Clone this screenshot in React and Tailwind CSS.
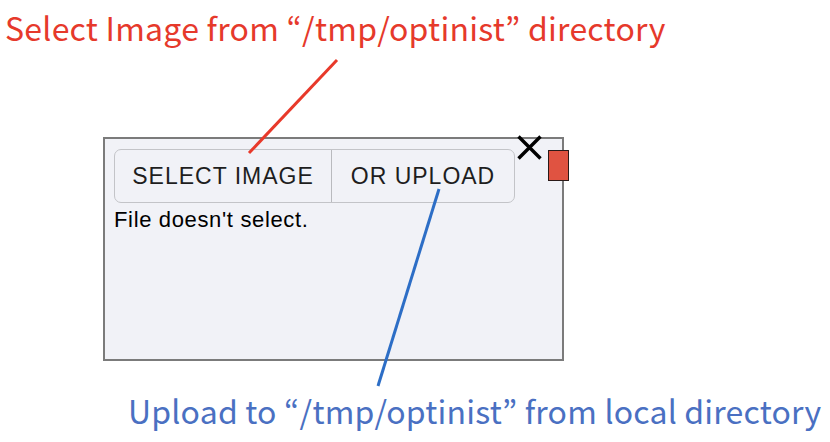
export default function App() {
  return (
    <div className="relative w-[830px] h-[442px] overflow-hidden bg-white">
      <p
        className="pl-[5px] pt-[7px] text-[32px] leading-[40px] tracking-[0.25px] text-[#e6392b] whitespace-nowrap"
        style={{ fontFamily: '"Noto Sans CJK JP", "Noto Sans", sans-serif' }}
      >
        Select Image from “/tmp/optinist” directory
      </p>

      <div
        className="relative ml-[103px] mt-[90px] w-[461px] h-[224px] border-2 border-[#7b7b7b] bg-[#f1f2f7] pl-[9px] pt-[10px]"
        style={{ fontFamily: '"Liberation Sans", Arial, sans-serif' }}
      >
        <div className="flex h-[54px] w-[401px] rounded-[7px] border border-[#c3c4c8] text-[23px] tracking-[1px] text-[#1e1e1e]">
          <div className="flex w-[217px] items-center justify-center border-r border-[#b9babe] pt-[1px]">
            SELECT IMAGE
          </div>
          <div className="flex flex-1 items-center justify-center pt-[1px]">OR UPLOAD</div>
        </div>
        <p className="mt-[4px] text-[22px] leading-[26px] tracking-[0.65px] text-black">
          File doesn't select.
        </p>

        <svg
          className="absolute left-[411px] top-[-5px] h-[27px] w-[27px]"
          viewBox="0 0 27 27"
        >
          <path d="M2.5 2.5 L24.5 24.5 M24.5 2.5 L2.5 24.5" stroke="#000" strokeWidth="3.4" strokeLinecap="butt" />
        </svg>
        <div className="absolute left-[443px] top-[11px] h-[31px] w-[21px] border-[1.5px] border-[#2a1a18] bg-[#e05341]" />
      </div>

      <p
        className="mt-[29px] pl-[128px] text-[32px] leading-[40px] tracking-[0.2px] text-[#4a70c2] whitespace-nowrap"
        style={{ fontFamily: '"Noto Sans CJK JP", "Noto Sans", sans-serif' }}
      >
        Upload to “/tmp/optinist” from local directory
      </p>

      <svg className="pointer-events-none absolute inset-0 h-[442px] w-[830px]" viewBox="0 0 830 442">
        <line x1="337" y1="60" x2="249" y2="153" stroke="#e8392a" strokeWidth="3" />
        <line x1="439" y1="189" x2="378" y2="386" stroke="#2d6ec6" strokeWidth="3" />
      </svg>
    </div>
  );
}
